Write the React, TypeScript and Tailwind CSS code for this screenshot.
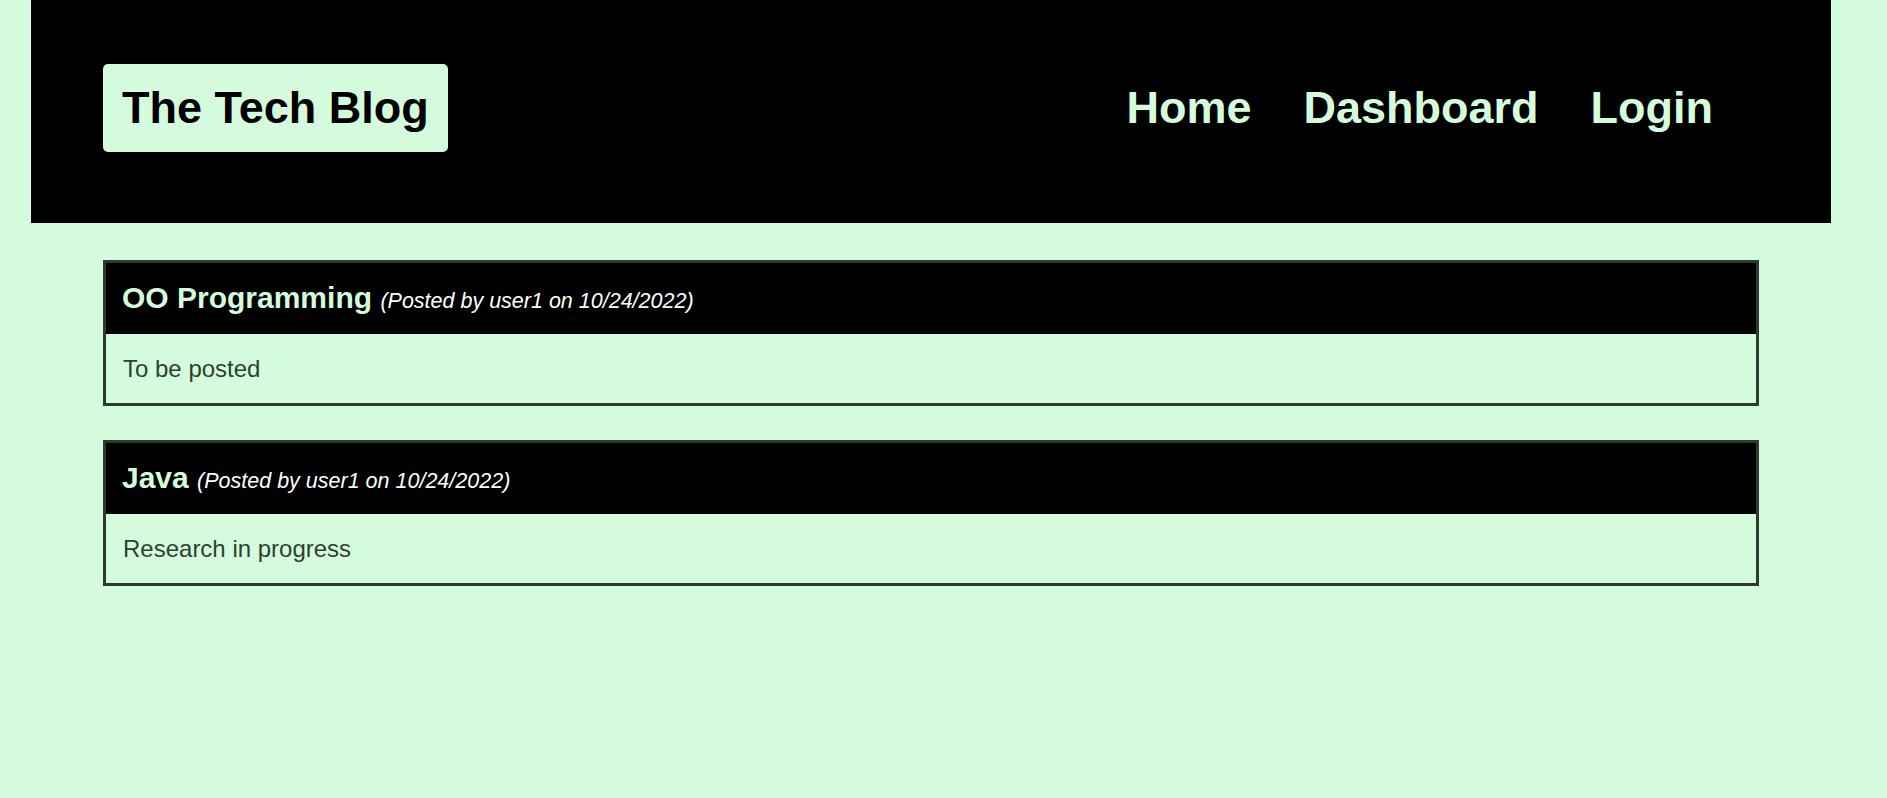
const posts = [
  { title: "OO Programming", author: "user1", date: "10/24/2022", body: "To be posted" },
  { title: "Java", author: "user1", date: "10/24/2022", body: "Research in progress" },
];

function PostCard({ post }: { post: (typeof posts)[number] }) {
  return (
    <article className="border-[3px] border-[#2d3b2f]">
      <header className="bg-black px-[16px] h-[71px] flex items-center">
        <h2 className="text-[#d4fcdc] text-[30px] font-bold leading-none -mt-[2px]">
          {post.title}{" "}
          <span className="text-white text-[21.5px] font-normal italic">
            (Posted by {post.author} on {post.date})
          </span>
        </h2>
      </header>
      <div className="px-[17px] h-[69px] flex items-center">
        <p className="text-[#2f3f31] text-[24px] leading-none">{post.body}</p>
      </div>
    </article>
  );
}

export default function App() {
  return (
    <div
      className="min-h-screen bg-[#d4fcdc]"
      style={{ fontFamily: '"Liberation Sans", Arial, sans-serif' }}
    >
      <div className="ml-[31px] w-[1800px]">
        <header className="bg-black h-[223px] pt-[64px] pl-[72px] pr-[118px] flex items-start justify-between">
          <h1 className="bg-[#d4fcdc] text-black rounded-[5px] px-[19px] py-[19px] text-[45px] leading-[50px] font-bold">
            The Tech Blog
          </h1>
          <nav className="flex gap-[52px] pt-[19px]">
            <a href="#" className="text-[#d4fcdc] text-[45px] leading-[50px] font-bold">Home</a>
            <a href="#" className="text-[#d4fcdc] text-[45px] leading-[50px] font-bold">Dashboard</a>
            <a href="#" className="text-[#d4fcdc] text-[45px] leading-[50px] font-bold">Login</a>
          </nav>
        </header>

        <main className="px-[72px] pt-[37px] flex flex-col gap-[34px]">
          {posts.map((post) => (
            <PostCard key={post.title} post={post} />
          ))}
        </main>
      </div>
    </div>
  );
}
